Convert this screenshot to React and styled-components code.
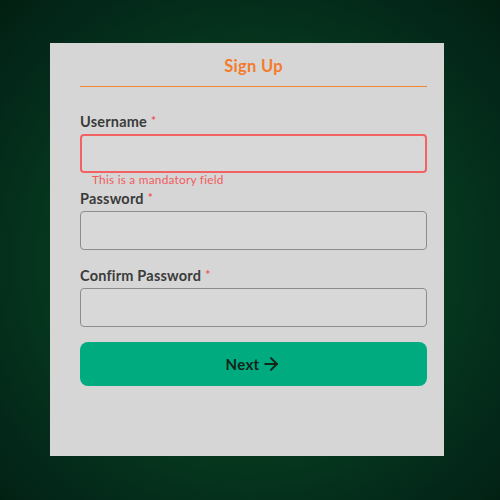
import React from "react";
import styled, { createGlobalStyle } from "styled-components";
import { ArrowRight } from "lucide-react";

const Global = createGlobalStyle`
  html, body { margin: 0; padding: 0; }
  body { font-family: Lato, "Noto Sans", sans-serif; }
  * { box-sizing: border-box; }
`;

const Page = styled.div`
  width: 500px;
  height: 500px;
  display: flex;
  align-items: flex-start;
  padding: 43px 56px 44px 50px;
  background: radial-gradient(circle at 50% 52%, #0b4b26 0%, #073d1e 45%, #03291a 80%, #021f12 100%);
`;

const Card = styled.div`
  width: 394px;
  height: 413px;
  background: #d6d6d6;
  padding: 13px 17px 0 30px;
  display: flex;
  flex-direction: column;
`;

const Title = styled.h1`
  margin: 0;
  padding: 0 0 10px;
  line-height: 20px;
  font-size: 16.5px;
  font-weight: 700;
  color: #f47b2c;
  text-align: center;
  border-bottom: 1px solid #f5862f;
  letter-spacing: 0.3px;
`;

const Form = styled.form`
  margin-top: 26px;
  display: flex;
  flex-direction: column;
  gap: 3px;
`;

const Field = styled.div`
  display: flex;
  flex-direction: column;
`;

const Label = styled.label`
  display: flex;
  align-items: flex-start;
  height: 18px;
  font-size: 14.5px;
  line-height: 18px;
  font-weight: 700;
  color: #3b3b3b;
  margin-bottom: 3px;
  letter-spacing: 0.2px;
`;

const Star = styled.span`
  color: #f0555a;
  font-size: 12px;
  line-height: 14px;
  margin: 1px 0 0 4px;
`;

const Input = styled.input`
  display: block;
  height: 39px;
  width: 100%;
  margin: 0;
  background: #d8d8d8;
  border: ${(p) => (p.$error ? "2px solid #f26262" : "1.5px solid #8c8c8c")};
  border-radius: 4px;
  outline: none;
  font: inherit;
`;

const Helper = styled.div`
  height: 14px;
  line-height: 14px;
  font-size: 11.8px;
  color: #f25a5e;
  padding-left: 12px;
  letter-spacing: 0.25px;
`;

const Button = styled.button`
  margin-top: -2px;
  height: 44px;
  width: 100%;
  border: none;
  border-radius: 8px;
  background: #00ab80;
  color: #132519;
  font: inherit;
  font-size: 15px;
  font-weight: 700;
  display: flex;
  align-items: center;
  justify-content: center;
  gap: 2px;
  cursor: pointer;
  letter-spacing: 0.3px;
`;

const fields = [
  { label: "Username", error: "This is a mandatory field" },
  { label: "Password", type: "password" },
  { label: "Confirm Password", type: "password" },
];

export default function App() {
  return (
    <>
      <Global />
      <Page>
        <Card>
          <Title>Sign Up</Title>
          <Form onSubmit={(e) => e.preventDefault()}>
            {fields.map((f) => (
              <Field key={f.label}>
                <Label>
                  {f.label}
                  <Star>*</Star>
                </Label>
                <Input type={f.type || "text"} $error={!!f.error} />
                <Helper>{f.error || ""}</Helper>
              </Field>
            ))}
            <Button type="submit">
              Next
              <ArrowRight size={20} strokeWidth={2.4} />
            </Button>
          </Form>
        </Card>
      </Page>
    </>
  );
}
